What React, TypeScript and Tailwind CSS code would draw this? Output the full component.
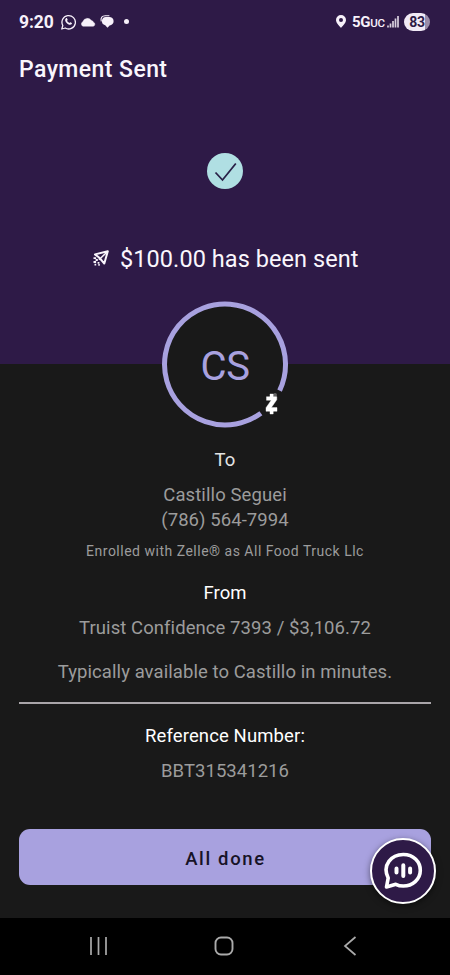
import React from "react";

function StatusBar() {
  return (
    <div className="flex h-[43px] items-center justify-between pl-[19px] pr-[20px] text-[#f7f1fa]">
      <div className="flex items-center">
        <span className="w-[42px] whitespace-nowrap text-[17.500px] font-bold leading-[20px] tracking-[-0.050px]">9:20</span>
        <svg width="15" height="16" viewBox="0 0 15 16" fill="none" className="block">
          <path d="M.8 15 1.8 11.5A6.7 6.7 0 1 1 4.2 14Z" stroke="currentColor" strokeWidth="1.3" strokeLinejoin="round" />
          <path d="M4.9 4.4c.5-.5 1-.4 1.2 0l.6 1.3c.1.3-.5.8-.6 1.1.4 1 1.3 1.8 2.3 2.2.4 0 .8-.8 1.1-.7l1.3.7c.3.2.1.9-.3 1.3-.6.6-1.7.7-2.9.1C5.900 9.600 4.600 8 4.200 6.500 4 5.600 4.400 4.800 4.900 4.400Z" fill="currentColor" />
        </svg>
        <svg width="16" height="10" viewBox="0 0 16 10" className="ml-[4px] block">
          <path d="M3 9.300A2.500 2.500 0 0 1 2.800 4.700 4.800 4.800 0 0 1 11.200 3.200a3.400 3.400 0 0 1 2.300 2.100A2.100 2.100 0 0 1 13.300 9.300Z" fill="currentColor" stroke="currentColor" strokeWidth=".4" />
        </svg>
        <svg width="14" height="13" viewBox="0 0 14 13" className="ml-[4px] block">
          <path d="M1.200 6C.4 2.600 2.200.7 5.200.7H9" fill="none" stroke="currentColor" strokeWidth="1.100" strokeLinecap="round" />
          <path d="M5.800 2h3.400a4.200 4.200 0 0 1 .4 8.400L7.500 12.800l-2.300-2.600A4.150 4.150 0 0 1 5.800 2Z" fill="currentColor" />
        </svg>
        <span className="ml-[10px] h-[5px] w-[5px] rounded-full bg-[#f7f1fa]" />
      </div>
      <div className="flex items-center">
        <svg width="10" height="13" viewBox="0 0 10 13" className="block">
          <path fillRule="evenodd" d="M5 0a5 5 0 0 1 5 5c0 3-3.200 5.700-5 8C3.200 10.700 0 8 0 5a5 5 0 0 1 5-5Zm0 3a2 2 0 1 0 0 4 2 2 0 0 0 0-4Z" fill="currentColor" />
        </svg>
        <span className="ml-[6px] mt-[2px] w-[35px] whitespace-nowrap text-[15px] font-bold leading-[20px] tracking-[-0.300px]">
          5G<span className="text-[11.500px] font-medium">UC</span>
        </span>
        <svg width="12" height="13" viewBox="0 0 12 13" className="block">
          <path d="M1 10.500V12.500M3.500 8.500V12.500M6 6V12.500M8.500 3.500V12.500M11 1V12.500" stroke="currentColor" strokeWidth="1.700" opacity=".85" />
        </svg>
        <span className="ml-[5px] flex h-[18px] w-[26px] items-center justify-center rounded-full bg-[linear-gradient(90deg,#f1eaf6_82%,#9a8ca8_82%)] text-[14px] font-bold leading-[18px] tracking-[-0.300px] text-[#2d1b45]">
          83
        </span>
      </div>
    </div>
  );
}

function Rocket() {
  return (
    <svg width="16" height="16" viewBox="0 0 16 16" className="-mt-[2px] block overflow-visible">
      <path d="M14.800 1.200 11.300 13.500 8.600 10.300 5.700 7.300 2 4.400Z" fill="none" stroke="currentColor" strokeWidth="2" strokeLinejoin="round" />
      <path d="M14.800 1.200 6 9.800" stroke="currentColor" strokeWidth="1.500" />
      <path d="M.5 8.200h2.600M.5 12h2.600M2.600 10h2.200M1.500 14.600h1.700M4.600 12.800h1.800M5.300 14.800h1.500" stroke="currentColor" strokeWidth="1.800" />
    </svg>
  );
}

function Avatar() {
  return (
    <div className="relative z-10 mx-auto -mt-[62px] h-[126px] w-[126px]">
      <svg width="126" height="126" viewBox="0 0 126 126" className="block overflow-visible">
        <circle cx="63" cy="62.500" r="62" fill="#191919" />
        <path d="M98.900 111.200A60.500 60.500 0 1 1 117.600 88.600" fill="none" stroke="#a8a1df" strokeWidth="5" />
        <circle cx="113" cy="93" r="2" fill="#666" />
        <path d="M104.500 94.700H114.800V97.700L109.400 105.600H115V109.300H104V105.700L109.200 98.300H104.500ZM108 92h3.200v3H108ZM108 108.500h3.200v3.500H108Z" fill="#fff" stroke="#fff" strokeWidth=".4" />
      </svg>
      <span className="absolute inset-x-0 top-[43px] text-center text-[40px] leading-[44px] tracking-[-0.500px] text-[#a8a1df]">CS</span>
    </div>
  );
}

function ChatButton() {
  return (
    <button className="absolute -right-[5px] top-[9px] flex h-[66px] w-[66px] items-center justify-center rounded-full border-[2.500px] border-white bg-[#2e1a47] shadow-[0_2px_6px_rgba(0,0,0,0.500)]">
      <svg width="40" height="40" viewBox="0 0 40 40" fill="none" stroke="#fff" strokeLinecap="round" strokeLinejoin="round" className="shrink-0">
        <path d="M3.500 36 5.200 27C-1.300 14 8.500 3.500 20.300 3.500 30.800 3.500 37.300 11 37.300 19.300 37.300 28.500 29.500 35 20.300 35 17.500 35 15 34.400 12.800 33.300Z" strokeWidth="3.600" />
        <path d="M13.500 17.500v4M20.300 14.300V25M27.100 17.500v4" strokeWidth="4" />
      </svg>
    </button>
  );
}

export default function App() {
  return (
    <main className="flex h-[975px] w-[450px] flex-col overflow-hidden bg-[#191919] font-['Roboto',sans-serif] text-[18.500px] leading-[26px] tracking-[0.070px] text-[#9c9c9c]">
      <header className="h-[364px] shrink-0 bg-[#2e1a47]">
        <StatusBar />
        <h1 className="pl-[19px] pt-[1px] text-[23px] font-medium leading-[52px] tracking-[0.430px] text-[#faf6fd]">Payment Sent</h1>
        <svg width="36" height="36" viewBox="0 0 36 36" className="mx-auto mt-[57px] block">
          <circle cx="18" cy="18" r="18" fill="#b0dfe3" />
          <path d="m8.500 19.500 7 7.500L28.800 10.500" fill="none" stroke="#2a2148" strokeWidth="1.800" />
        </svg>
        <div className="mt-[54px] flex h-[32px] items-center pl-[93px] text-[#faf6fd]">
          <Rocket />
          <p className="ml-[11px] whitespace-nowrap text-[23.500px] leading-[32px] tracking-[0.070px]">$100.00 has been sent</p>
        </div>
      </header>
      <Avatar />
      <section className="mt-[19px] flex shrink-0 flex-col items-center whitespace-nowrap">
        <h2 className="text-[#e3e3e3]">To</h2>
        <p className="mt-[9px] tracking-[0.100px]">Castillo Seguei</p>
        <p className="leading-[25px]">(786) 564-7994</p>
        <p className="mt-[8px] text-[14px] leading-[20px] tracking-[0.500px]">Enrolled with Zelle® as All Food Truck Llc</p>
        <h2 className="mt-[19px] text-white">From</h2>
        <p className="mt-[9px]">Truist Confidence 7393 / $3,106.72</p>
        <p className="mt-[18px]">Typically available to Castillo in minutes.</p>
      </section>
      <hr className="mx-[19px] mt-[17px] h-[2px] shrink-0 border-0 bg-[#a9a5a9]" />
      <section className="mt-[19px] flex shrink-0 flex-col items-center whitespace-nowrap">
        <h2 className="tracking-[0.120px] text-white">Reference Number:</h2>
        <p className="mt-[9px] tracking-[0.040px]">BBT315341216</p>
      </section>
      <div className="relative mx-[19px] mt-[45px] shrink-0">
        <button className="block h-[56px] w-full rounded-[11px] bg-[#a8a1df] pl-[1px] pt-[3px] text-[18.500px] font-medium tracking-[1.650px] text-[#171327]">All done</button>
        <ChatButton />
      </div>
      <nav className="mt-[33px] flex h-[57px] shrink-0 items-center bg-black pb-[2px] pl-[89px] text-[#aaa]">
        <svg width="19" height="20" viewBox="0 0 19 20" fill="none" stroke="currentColor" strokeWidth="1.700">
          <path d="M2 1V19M9.500 1V19M17 1V19" />
        </svg>
        <svg width="20" height="20" viewBox="0 0 20 20" fill="none" stroke="currentColor" strokeWidth="1.900" className="ml-[106px]">
          <rect x="1.500" y="1.500" width="17" height="17" rx="5.500" />
        </svg>
        <svg width="14" height="20" viewBox="0 0 14 20" fill="none" stroke="currentColor" strokeWidth="1.700" className="ml-[109px]">
          <path d="M12.500 1 2 10 12.500 19" />
        </svg>
      </nav>
    </main>
  );
}
